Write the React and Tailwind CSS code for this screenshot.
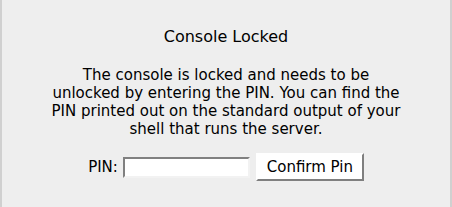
export default function App() {
  return (
    <div
      className="h-[207px] w-[452px] bg-[#eeeeee] border-x-2 border-[#d0d0d0] flex flex-col items-center pt-[28px] text-black"
      style={{ fontFamily: '"DejaVu Sans", sans-serif' }}
    >
      <h1 className="text-[16px] leading-[18px]">Console Locked</h1>
      <p className="mt-[20px] w-[352px] text-center text-[15px] leading-[18px]">
        The console is locked and needs to be unlocked by entering the PIN. You can find the PIN printed out on the
        standard output of your shell that runs the server.
      </p>
      <div className="mt-[15px] flex items-center">
        <label className="text-[15px] leading-[18px]">PIN:</label>
        <input
          type="text"
          className="ml-[5px] w-[127px] h-[21px] bg-white border-2 border-t-[#808080] border-l-[#808080] border-b-[#f2f2f2] border-r-[#f2f2f2] outline-none"
        />
        <button className="ml-[6px] w-[108px] h-[28px] bg-white border-2 border-t-white border-l-white border-b-[#7f7f7f] border-r-[#7f7f7f] text-[15px] leading-[18px]">
          Confirm Pin
        </button>
      </div>
    </div>
  );
}
